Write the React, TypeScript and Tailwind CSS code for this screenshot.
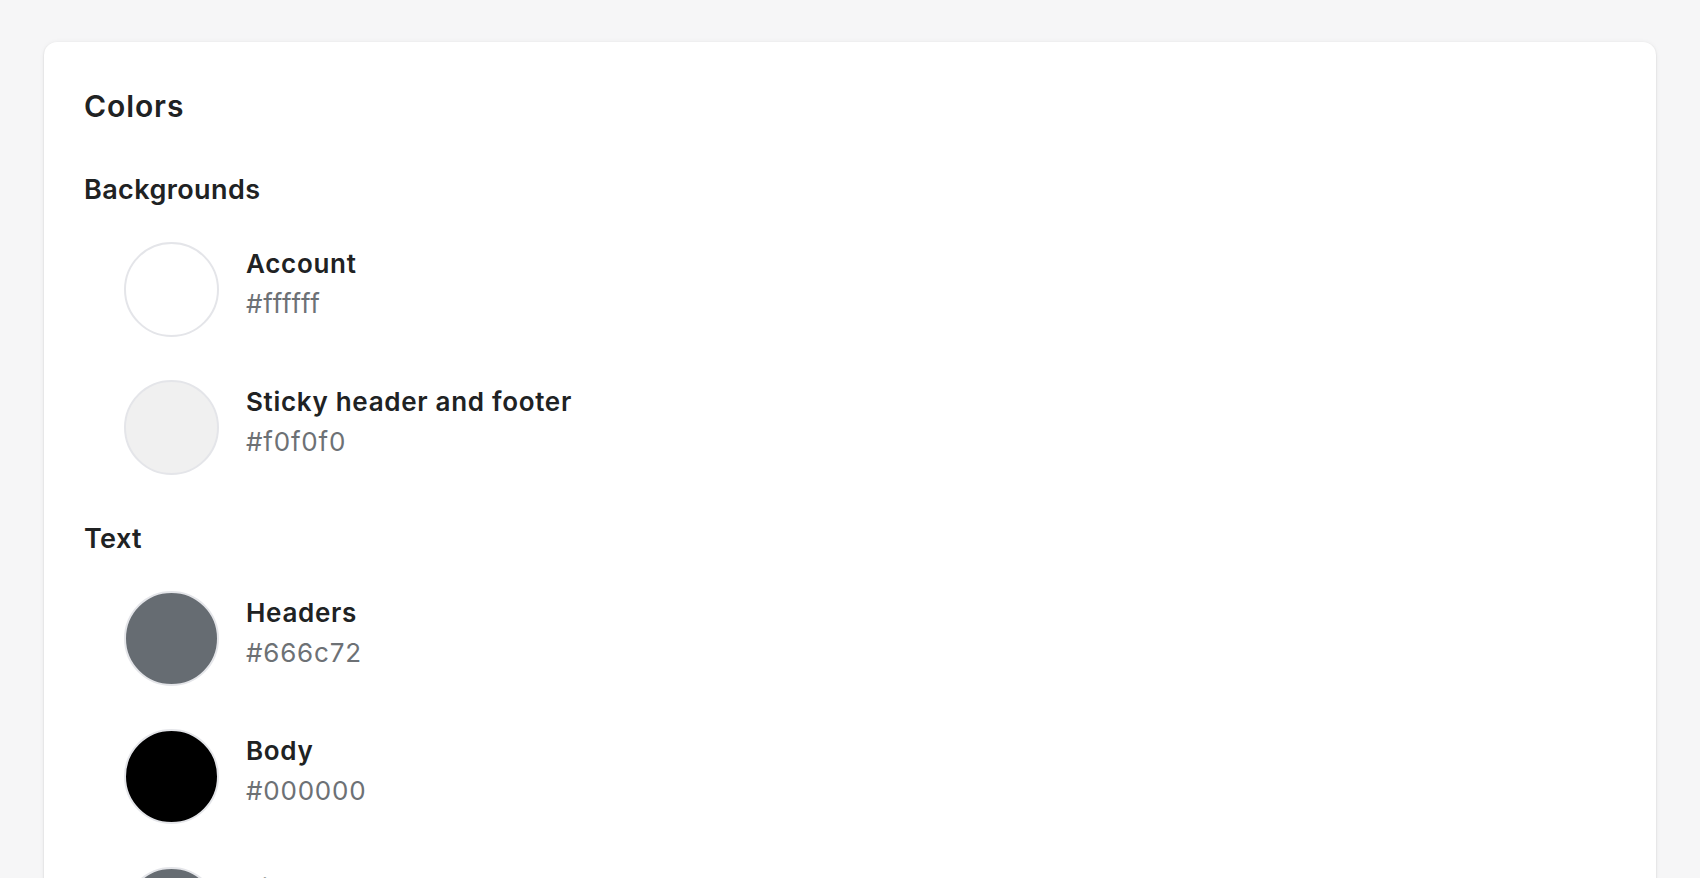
import React from "react";

type Swatch = { name: string; hex: string };

const sections: { title: string; items: Swatch[] }[] = [
  {
    title: "Backgrounds",
    items: [
      { name: "Account", hex: "#ffffff" },
      { name: "Sticky header and footer", hex: "#f0f0f0" },
    ],
  },
  {
    title: "Text",
    items: [
      { name: "Headers", hex: "#666c72" },
      { name: "Body", hex: "#000000" },
      { name: "Links", hex: "#666c72" },
    ],
  },
  {
    title: "Buttons",
    items: [
      { name: "Primary", hex: "#000000" },
      { name: "Secondary", hex: "#ffffff" },
    ],
  },
];

function Row({ item }: { item: Swatch }) {
  return (
    <div className="flex items-start gap-[27px] pl-[40px]">
      <div
        className="h-[95px] w-[95px] shrink-0 rounded-full border-2 border-[#e4e5e9]"
        style={{ backgroundColor: item.hex }}
      />
      <div className="flex flex-col pt-[2px]">
        <div className="text-[26px] font-semibold leading-[40px] tracking-[0.7px] text-[#202223]">{item.name}</div>
        <div className="text-[26px] font-normal leading-[40px] tracking-[0.8px] text-[#6d7175]">{item.hex}</div>
      </div>
    </div>
  );
}

export default function App() {
  return (
    <div
      className="min-h-screen bg-[#f6f6f7] px-[44px] pt-[42px] pb-[44px]"
      style={{ fontFamily: "Inter, 'Noto Sans', sans-serif" }}
    >
      <div className="rounded-[13px] bg-white px-[40px] pt-[44px] pb-[44px] shadow-[0_0_5px_rgba(23,24,24,0.05),0_1px_2px_rgba(0,0,0,0.15)]">
        <h2 className="mb-[46px] text-[30px] font-semibold leading-[40px] tracking-[0.9px] text-[#202223]">Colors</h2>
        <div className="flex flex-col gap-[46px]">
          {sections.map((s) => (
            <div key={s.title}>
              <h3 className="mb-[34px] text-[27px] font-semibold leading-[36px] tracking-[0.4px] text-[#202223]">{s.title}</h3>
              <div className="flex flex-col gap-[43px]">
                {s.items.map((it) => (
                  <Row key={it.name + it.hex} item={it} />
                ))}
              </div>
            </div>
          ))}
        </div>
      </div>
    </div>
  );
}
